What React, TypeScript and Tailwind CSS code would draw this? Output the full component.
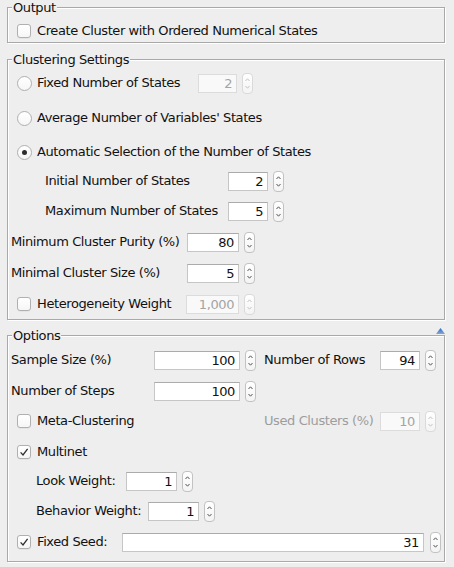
import type { ReactNode } from "react";

const font = "font-['DejaVu_Sans',sans-serif] text-[13px] tracking-[-0.4px]";

function Box({ title, className, children }: { title: string; className?: string; children: ReactNode }) {
    return (
        <div
            className={`relative border border-[#a9a9a9] shadow-[inset_1px_1px_0_#fff,1px_1px_0_#fff] ${className ?? ""}`}
        >
            <div className="-mt-[8px] ml-[4px] w-fit bg-[#eeeeee] px-[1px] leading-[16px] text-[#111]">
                {title}
            </div>
            {children}
        </div>
    );
}

function CheckBox({ checked }: { checked?: boolean }) {
    return (
        <span className="ml-[9px] flex h-[14px] w-[14px] shrink-0 items-center justify-center rounded-[3px] border border-[#b0b0b0] bg-gradient-to-b from-white to-[#f6f6f6] shadow-[0_0.5px_0.5px_rgba(0,0,0,0.08)]">
            {checked && (
                <svg width="12" height="12" viewBox="0 0 12 12">
                    <path d="M2.6 6.4 L5 8.9 L9.6 2.8" fill="none" stroke="#2e2e2e" strokeWidth="1.3" />
                </svg>
            )}
        </span>
    );
}

function Radio({ selected }: { selected?: boolean }) {
    return (
        <span className="ml-[9px] flex h-[15px] w-[15px] shrink-0 items-center justify-center rounded-full border border-[#b0b0b0] bg-gradient-to-b from-white to-[#f6f6f6]">
            {selected && <span className="h-[5px] w-[5px] rounded-full bg-[#2e2e2e]" />}
        </span>
    );
}

function Spinner({ disabled, className }: { disabled?: boolean; className?: string }) {
    const c = disabled ? "#c4c4c4" : "#555";
    return (
        <span
            className={`flex h-[21px] w-[11px] shrink-0 items-center justify-center rounded-[4px] border ${disabled ? "border-[#dadada]" : "border-[#c2c2c2]"
                } bg-gradient-to-b from-white to-[#f4f4f4] ${className ?? "ml-[5px]"}`}
        >
            <svg width="9" height="19" viewBox="0 0 9 19">
                <path d="M2.5 7 L4.5 4.8 L6.5 7" fill="none" stroke={c} strokeWidth="1" />
                <path d="M2.5 12 L4.5 14.2 L6.5 12" fill="none" stroke={c} strokeWidth="1" />
            </svg>
        </span>
    );
}

function Field({ value, className, disabled }: { value: string; className: string; disabled?: boolean }) {
    return (
        <span
            className={`h-[19px] shrink-0 border pr-[4px] text-right leading-[17px] ${className} ${disabled
                    ? "border-[#dcdcdc] bg-[#f9f9f9] text-[#a4a4a4]"
                    : "border-[#c6c6c6] border-t-[#ababab] bg-white text-[#111]"
                }`}
        >
            {value}
        </span>
    );
}

function Row({ className, children }: { className?: string; children: ReactNode }) {
    return <div className={`flex h-[22px] items-center whitespace-nowrap text-[#111] ${className ?? ""}`}>{children}</div>;
}

export default function App() {
    return (
        <div className={`h-[567px] w-[454px] overflow-hidden bg-[#eeeeee] pl-[7px] pt-[7px] ${font}`}>
            <div className="w-[438px]">
                {/* output */}
                <Box title="Output">
                    <Row className="mt-[4px]">
                        <CheckBox />
                        <span className="ml-[6px]">Create Cluster with Ordered Numerical States</span>
                    </Row>
                </Box>

                {/* clustering settings */}
                <Box title="Clustering Settings" className="mt-[16px] pb-[4px]">
                    <Row className="mt-[4px]">
                        <Radio />
                        <span className="ml-[5px] w-[161px]">Fixed Number of States</span>
                        <Field value="2" className="w-[39px]" disabled />
                        <Spinner disabled />
                    </Row>
                    <Row className="mt-[13px]">
                        <Radio />
                        <span className="ml-[5px]">Average Number of Variables' States</span>
                    </Row>
                    <Row className="mt-[12px]">
                        <Radio selected />
                        <span className="ml-[5px]">Automatic Selection of the Number of States</span>
                    </Row>
                    <Row className="mt-[7px]">
                        <span className="ml-[37px] w-[183px]">Initial Number of States</span>
                        <Field value="2" className="w-[40px]" />
                        <Spinner />
                    </Row>
                    <Row className="mt-[8px]">
                        <span className="ml-[37px] w-[183px]">Maximum Number of States</span>
                        <Field value="5" className="w-[40px]" />
                        <Spinner />
                    </Row>
                    <Row className="mt-[9px]">
                        <span className="ml-[3px] w-[176px]">Minimum Cluster Purity (%)</span>
                        <Field value="80" className="w-[52px]" />
                        <Spinner />
                    </Row>
                    <Row className="mt-[9px]">
                        <span className="ml-[3px] w-[176px]">Minimal Cluster Size (%)</span>
                        <Field value="5" className="w-[52px]" />
                        <Spinner />
                    </Row>
                    <Row className="mt-[9px]">
                        <CheckBox />
                        <span className="ml-[6px] w-[149px]">Heterogeneity Weight</span>
                        <Field value="1,000" className="w-[53px]" disabled />
                        <Spinner disabled />
                    </Row>
                </Box>

                {/* options */}
                <Box title="Options" className="mt-[15px] pb-[8px]">
                    <svg className="absolute -top-[8px] right-[-1px]" width="9" height="6" viewBox="0 0 9 6">
                        <defs>
                            <linearGradient id="tri" x1="0" y1="0" x2="0" y2="1">
                                <stop offset="0" stopColor="#2f6fd0" />
                                <stop offset="0.6" stopColor="#5a8fd8" />
                                <stop offset="1" stopColor="#9aa4b0" />
                            </linearGradient>
                        </defs>
                        <polygon points="4.5,0 9,6 0,6" fill="url(#tri)" />
                    </svg>
                    <Row className="mt-[5px]">
                        <span className="ml-[3px] w-[143px]">Sample Size (%)</span>
                        <Field value="100" className="w-[86px]" />
                        <Spinner />
                        <span className="ml-[8px] w-[116px]">Number of Rows</span>
                        <Field value="94" className="w-[40px]" />
                        <Spinner />
                    </Row>
                    <Row className="mt-[9px]">
                        <span className="ml-[3px] w-[143px]">Number of Steps</span>
                        <Field value="100" className="w-[86px]" />
                        <Spinner />
                    </Row>
                    <Row className="mt-[8px]">
                        <CheckBox />
                        <span className="ml-[6px] w-[227px]">Meta-Clustering</span>
                        <span className="w-[116px] text-[#9d9d9d]">Used Clusters (%)</span>
                        <Field value="10" className="w-[40px]" disabled />
                        <Spinner disabled />
                    </Row>
                    <Row className="mt-[9px]">
                        <CheckBox checked />
                        <span className="ml-[6px]">Multinet</span>
                    </Row>
                    <Row className="mt-[7px]">
                        <span className="ml-[28px] w-[90px]">Look Weight:</span>
                        <Field value="1" className="w-[51px]" />
                        <Spinner />
                    </Row>
                    <Row className="mt-[8px]">
                        <span className="ml-[28px] w-[112px]">Behavior Weight:</span>
                        <Field value="1" className="w-[51px]" />
                        <Spinner />
                    </Row>
                    <Row className="mt-[9px]">
                        <CheckBox checked />
                        <span className="ml-[6px] w-[85px]">Fixed Seed:</span>
                        <Field value="31" className="w-[302px]" />
                        <Spinner className="ml-[6px]" />
                    </Row>
                </Box>
            </div>
        </div>
    );
}
